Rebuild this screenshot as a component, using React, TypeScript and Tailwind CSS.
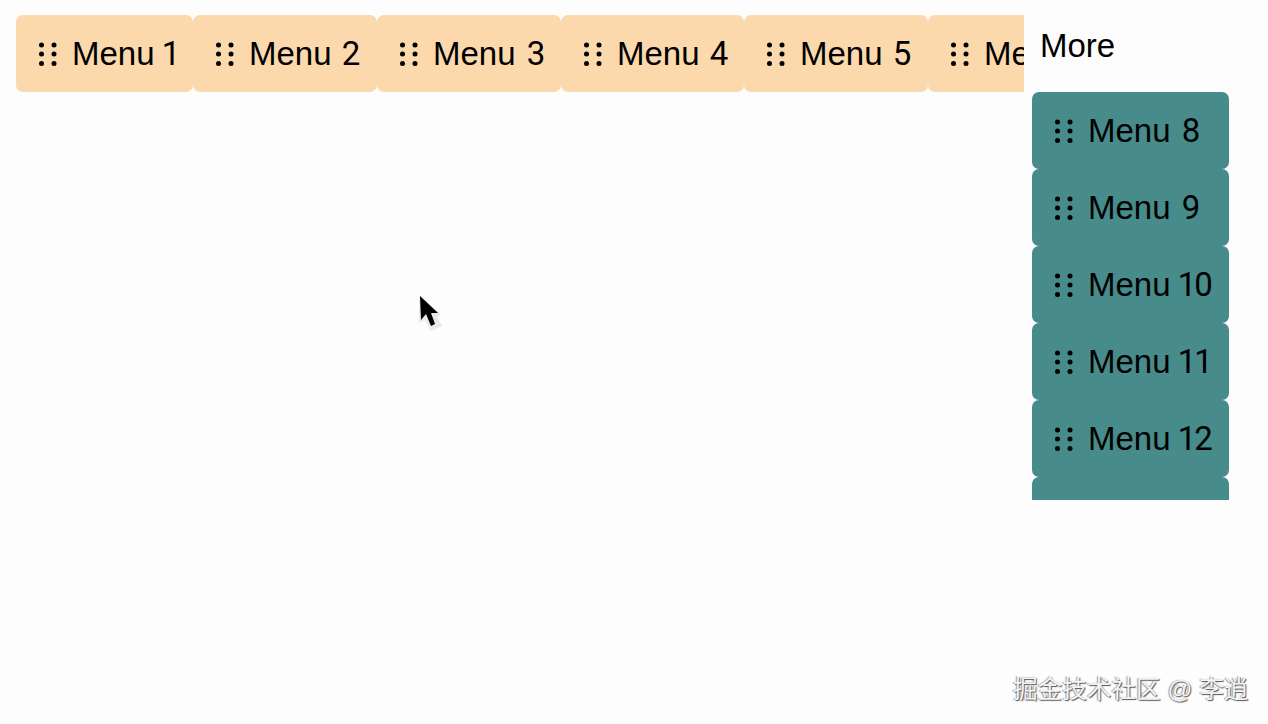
const top = [
  { label: "Menu", digits: "1", w: "w-[177px] [word-spacing:-2px]" },
  { label: "Menu", digits: "2", w: "w-[184px] [word-spacing:1px]" },
  { label: "Menu", digits: "3", w: "w-[184px] [word-spacing:2px]" },
  { label: "Menu", digits: "4", w: "w-[183px] [word-spacing:1px]" },
  { label: "Menu", digits: "5", w: "w-[184px] [word-spacing:1px]" },
  { label: "Menu", digits: "6", w: "w-[184px] [word-spacing:1px]" },
  { label: "Menu", digits: "7", w: "w-[184px] [word-spacing:1px]" },
];
const side = [
  { label: "Menu", digits: "8", w: "[word-spacing:2px]" },
  { label: "Menu", digits: "9", w: "[word-spacing:2px]" },
  { label: "Menu", digits: "10", w: "[word-spacing:-2px]" },
  { label: "Menu", digits: "11", w: "[word-spacing:-2px]" },
  { label: "Menu", digits: "12", w: "[word-spacing:-2px]" },
  { label: "Menu", digits: "13", w: "[word-spacing:-2px]" },
];

function Grip() {
  return (
    <svg width="20" height="24" viewBox="0 0 20 24" className="shrink-0 text-black" aria-hidden="true">
      {[3.5, 16].map((x) =>
        [3, 12, 21.5].map((y) => <circle key={`${x}-${y}`} cx={x} cy={y} r="2.5" fill="currentColor" />)
      )}
    </svg>
  );
}

function Item({ label, digits, className }: { label: string; digits: string; className: string }) {
  return (
    <div className={`flex h-[77px] shrink-0 items-center gap-[14px] rounded-[7px] pl-[22px] text-[33px] leading-none text-black ${className}`}>
      <Grip />
      <span className="whitespace-pre">
        {label} <span className="font-['Roboto',sans-serif] tracking-[-2px]">{digits}</span>
      </span>
    </div>
  );
}

export default function App() {
  return (
    <div className="relative flex h-[724px] w-[1268px] overflow-hidden bg-[#fdfdfe] font-['Liberation_Sans','Noto_Sans_CJK_SC',sans-serif]">
      <div className="flex h-[92px] w-[1024px] shrink-0 overflow-hidden pl-4 pt-[15px]">
        {top.map((t) => (
          <Item key={t.digits} label={t.label} digits={t.digits} className={`bg-[#fbd9ad] ${t.w}`} />
        ))}
      </div>
      <div className="flex w-[205px] shrink-0 flex-col">
        <div className="flex h-[92px] items-start pl-4 pt-[27px] text-[33px] leading-[38px] text-black">More</div>
        <div className="ml-2 flex h-[408px] w-[197px] flex-col overflow-hidden">
          {side.map((s) => (
            <Item key={s.digits} label={s.label} digits={s.digits} className={`w-[197px] bg-[#478b8b] ${s.w}`} />
          ))}
        </div>
      </div>
      <svg width="30" height="42" viewBox="0 0 30 42" className="absolute left-[418px] top-[295px]" aria-hidden="true">
        <path d="M1 0 L1 28 L7 25 L13 36 L24 31 L19 22 L23 19 Z" fill="#dcdce4" opacity="0.6" />
        <path d="M2 1 L3 25 L8 19 L13 31 L17 29 L13 18 L20 18 Z" fill="#000" />
      </svg>
      <div className="absolute left-[1013px] top-[675px] whitespace-nowrap text-[24.6px] leading-[30px] text-[#f4f4f4] [text-shadow:1px_1px_1px_#555,-1px_0_1px_#999]">
        掘金技术社区 @ 李逍
      </div>
    </div>
  );
}
